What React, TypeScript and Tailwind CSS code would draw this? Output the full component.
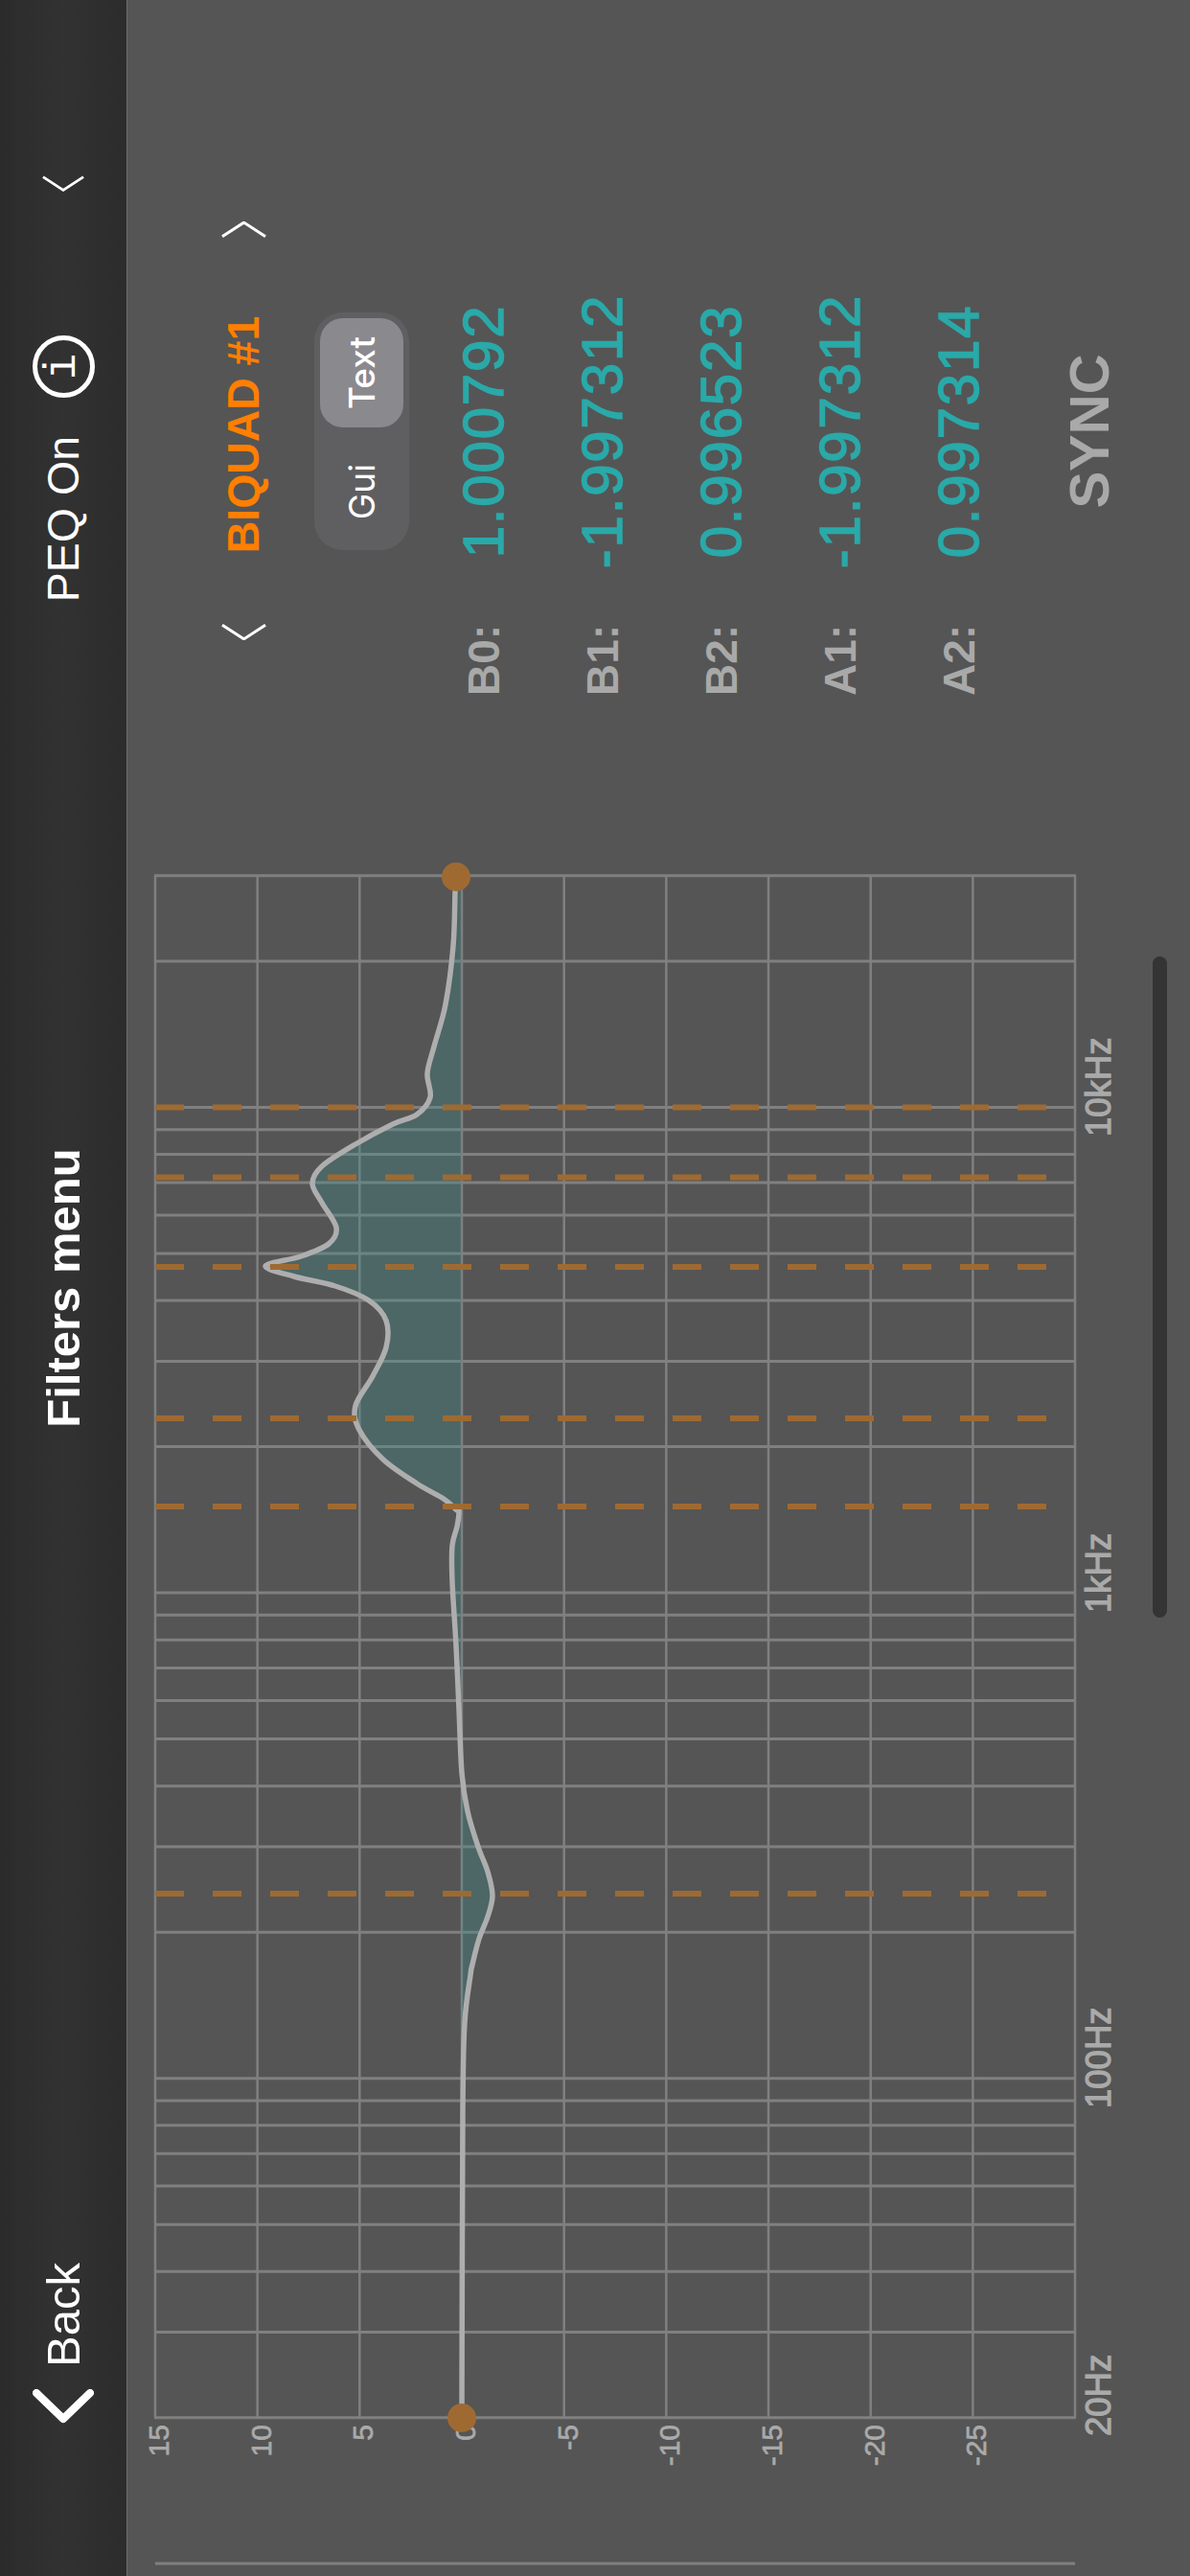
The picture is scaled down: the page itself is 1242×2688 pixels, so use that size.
const dbLines = [15, 10, 5, 0, -5, -10, -15, -20, -25, -30];
const freqLines = [
  20, 30, 40, 50, 60, 70, 80, 90, 100, 200, 300, 400, 500, 600, 700, 800, 900, 1000, 2000, 3000, 4000, 5000,
  6000, 7000, 8000, 9000, 10000, 20000, 30000,
];
const freqLabels = [
  { text: '20Hz', u: 146 },
  { text: '100Hz', u: 488 },
  { text: '1kHz', u: 1005 },
  { text: '10kHz', u: 1502 },
];
// filter centres, measured along the frequency axis
const filterMarks = [712, 1116, 1208, 1366, 1459.5, 1532.5];

const rows = [
  { label: 'B0:', value: '1.000792' },
  { label: 'B1:', value: '-1.997312' },
  { label: 'B2:', value: '0.996523' },
  { label: 'A1:', value: '-1.997312' },
  { label: 'A2:', value: '0.997314' },
];

// response curve, [dB axis px, freq axis px] from low to high frequency
const curve: [number, number][] = [
  [482, 165], [483, 486], [485, 577], [491, 627], [493, 638], [500, 665], [509, 688], [514, 710], [509, 735],
  [499, 761], [488, 798], [482, 838], [479, 905], [476, 971], [472, 1038], [472, 1075], [477, 1095], [479, 1110],
  [477, 1112], [463, 1124], [435, 1140], [400, 1165], [375, 1196], [371, 1221], [389, 1252], [403, 1282],
  [403, 1310], [385, 1331], [350, 1346], [307, 1356], [277, 1367], [314, 1377], [343, 1390], [351, 1407],
  [336, 1433], [326, 1453], [336, 1471], [371, 1494], [410, 1515], [435, 1525], [449, 1543], [446, 1568],
  [453, 1596], [465, 1640], [473, 1701], [475, 1757], [476, 1773],
];

const dbToV = (db: number) => 482 - (db / 5) * 106.67;
const freqToU = (f: number) => 2688 - (1155.5 - 506.6 * Math.log10(f / 10000));

function smoothPath(points: [number, number][]) {
  let d = `M${points[0][1]} ${points[0][0]}`;
  for (let i = 0; i < points.length - 1; i++) {
    const p0 = points[Math.max(i - 1, 0)];
    const p1 = points[i];
    const p2 = points[i + 1];
    const p3 = points[Math.min(i + 2, points.length - 1)];
    d += ` C${p1[1] + (p2[1] - p0[1]) / 6} ${p1[0] + (p2[0] - p0[0]) / 6} ${p2[1] - (p3[1] - p1[1]) / 6} ${p2[0] - (p3[0] - p1[0]) / 6} ${p2[1]} ${p2[0]}`;
  }
  return d;
}

function EqChart() {
  const line = smoothPath(curve);
  const first = curve[0];
  const last = curve[curve.length - 1];
  return (
    <svg viewBox="0 133 1800 1109" className="w-[1800px] h-full shrink-0" fontFamily="'Liberation Sans', Arial, sans-serif">
      <line x1="13" x2="13" y1="162" y2="1122" stroke="#808080" strokeWidth="3" />
      {freqLines.map((f) => (
        <line key={f} x1={freqToU(f)} x2={freqToU(f)} y1="161" y2="1123" stroke="#808080" strokeWidth="3" />
      ))}
      {dbLines.map((db) => (
        <line key={db} x1={freqToU(20)} x2={freqToU(30000)} y1={dbToV(db)} y2={dbToV(db)} stroke="#808080" strokeWidth="2.5" />
      ))}
      <path d={`${line} L${last[1]} 482 L${first[1]} 482 Z`} fill="#3a8e8e" fillOpacity="0.3" />
      <path d={line} fill="none" stroke="#aeaeae" strokeWidth="5.5" />
      {filterMarks.map((u) => (
        <line key={u} x1={u} x2={u} y1="162" y2="1092" stroke="#9f6a32" strokeWidth="6" strokeDasharray="30 30" />
      ))}
      {dbLines.slice(0, 9).map((db) => (
        <text key={db} x="158" y={dbToV(db) + 14} textAnchor="end" fontSize="30" fill="#aaaaaa" stroke="#aaaaaa" strokeWidth="0.7">
          {db}
        </text>
      ))}
      {freqLabels.map((l) => (
        <text key={l.text} x={l.u} y="1159" fontSize="36.5" fill="#aaaaaa" stroke="#aaaaaa" strokeWidth="1.2">
          {l.text}
        </text>
      ))}
      <circle cx={first[1]} cy="482" r="15" fill="#9f6a32" />
      <circle cx={last[1]} cy="476" r="15" fill="#9f6a32" />
    </svg>
  );
}

function ThinChevron({ dir, className }: { dir: 'left' | 'right'; className: string }) {
  return (
    <svg viewBox="0 0 17 48" className={className}>
      <polyline
        points={dir === 'left' ? '16,1 1,24 16,47' : '1,1 16,24 1,47'}
        fill="none"
        stroke="white"
        strokeWidth="3"
      />
    </svg>
  );
}

export default function App() {
  return (
    <div className="relative w-[1242px] h-[2688px] overflow-hidden bg-[#555555]">
      {/* the app is landscape, the screenshot is not */}
      <div className="absolute left-0 top-[2688px] w-[2688px] h-[1242px] origin-top-left -rotate-90 flex flex-col font-['Liberation_Sans',Arial,sans-serif]">
        <header className="h-[133px] shrink-0 grid grid-cols-3 items-center bg-gradient-to-b from-[#2b2b2b] via-[#323232] to-[#2c2c2c] border-b border-[#6c6c6c] text-white">
          <div className="flex items-center pl-[159px] gap-[23px]">
            <svg viewBox="0 0 36 64" className="w-[36px] h-[64px]">
              <polyline points="32,4 5,32 32,60" fill="none" stroke="white" strokeWidth="8" strokeLinecap="round" strokeLinejoin="round" />
            </svg>
            <span className="text-[49px] leading-none">Back</span>
          </div>
          <div className="text-center text-[49px] leading-none font-bold">Filters menu</div>
          <div className="flex items-center justify-end pr-[183px]">
            <span className="text-[46.5px] leading-none">PEQ On</span>
            <div className="ml-[40px] w-[65px] h-[65px] rounded-full border-[5px] border-white flex items-center justify-center">
              <span className="text-[46px] leading-none font-['Liberation_Mono',monospace]">i</span>
            </div>
            <ThinChevron dir="left" className="ml-[150px] w-[17px] h-[44px]" />
          </div>
        </header>

        <main className="relative flex flex-1 min-h-0">
          <EqChart />
          <section className="ml-[162px] w-[520px] shrink-0 pt-[91px]">
            <div className="ml-[58px] w-[437px] h-[60px] flex items-center justify-between">
              <ThinChevron dir="left" className="w-[17px] h-[47px]" />
              <span className="mr-[8px] text-[46.4px] leading-none font-bold text-[#ff7f00]">BIQUAD #1</span>
              <ThinChevron dir="right" className="w-[17px] h-[47px]" />
            </div>
            <div className="ml-[152px] mt-[44px] w-[248px] h-[99px] p-[6px] rounded-[30px] bg-[#5f5f61] flex items-stretch text-white text-[37px] font-['Inter',sans-serif]">
              <div className="flex-1 flex items-center justify-center pr-[12px]">Gui</div>
              <div className="w-[114px] rounded-[24px] bg-[#8a898e] flex items-center justify-center font-medium">Text</div>
            </div>
            <div className="mt-[16px]">
              {rows.map((row) => (
                <div key={row.label} className="h-[124px] flex items-center">
                  <span className="w-[76px] whitespace-nowrap text-[46px] font-bold text-[#a9a9a9]">{row.label}</span>
                  <span className="w-[400px] text-center text-[60px] tracking-[0.03em] text-[#2aa9a9] [-webkit-text-stroke:1.5px_#2aa9a9]">{row.value}</span>
                </div>
              ))}
            </div>
            <div className="ml-[76px] w-[400px] mt-[33px] h-[80px] flex items-center justify-center text-[58px] font-bold text-[#a9a9a9]">
              SYNC
            </div>
          </section>
          <div className="absolute left-[1000px] top-[1070px] w-[690px] h-[15px] rounded-full bg-[#343434]" />
        </main>
      </div>
    </div>
  );
}
